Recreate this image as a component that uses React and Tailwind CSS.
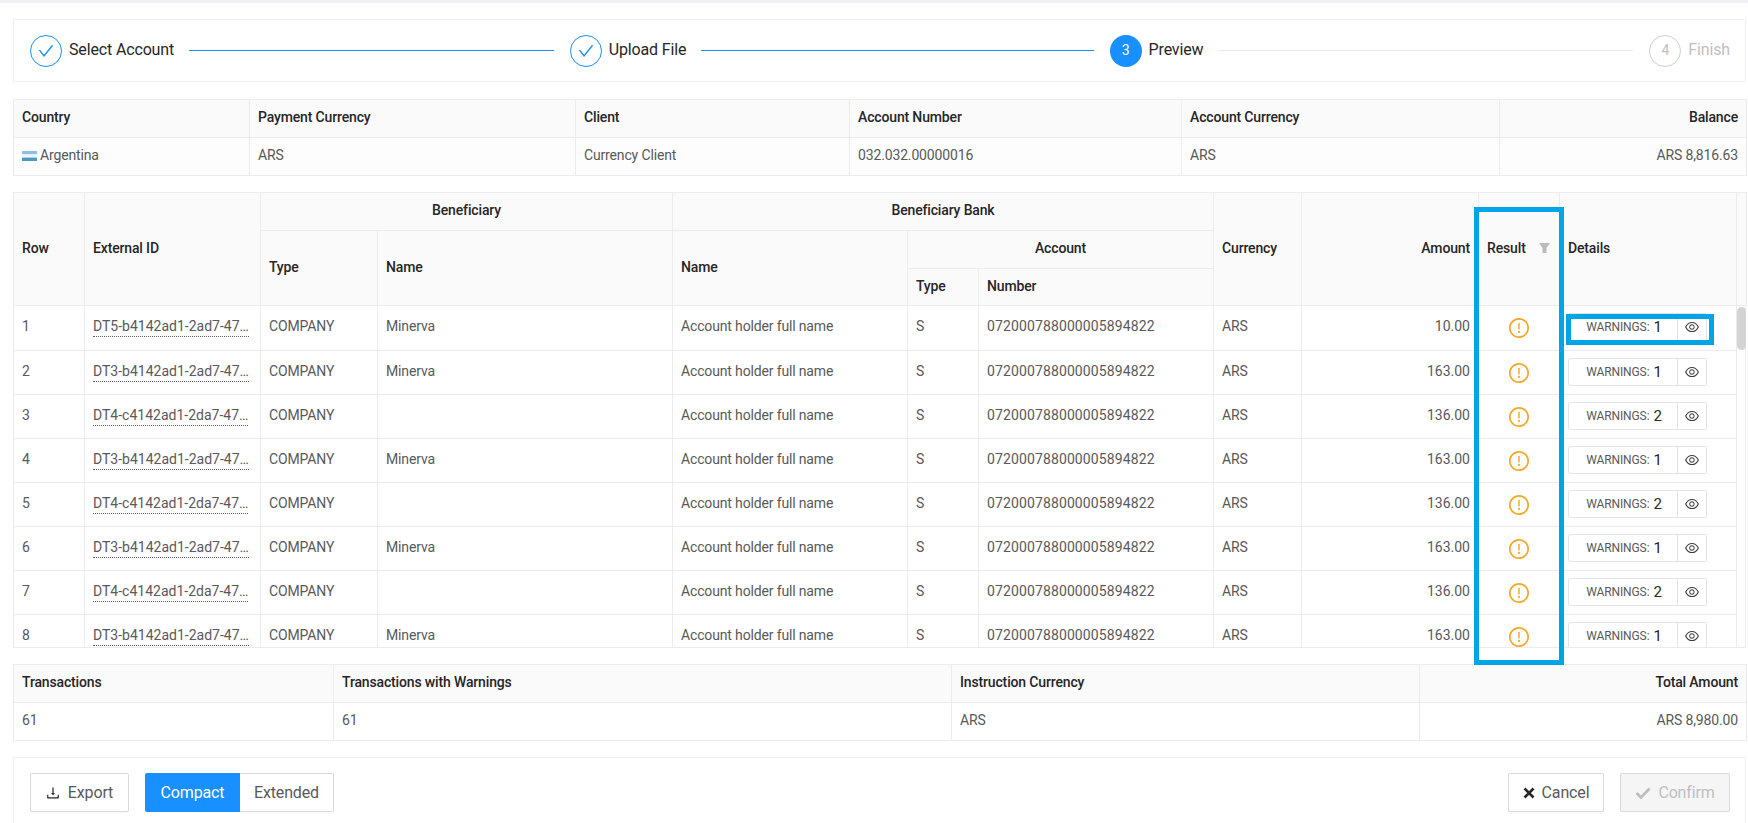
const EYE = "M942.2 486.2C847.4 286.5 704.1 186 512 186c-192.2 0-335.4 100.5-430.2 300.3a60.3 60.3 0 0 0 0 51.5C176.6 737.5 319.9 838 512 838c192.2 0 335.4-100.5 430.2-300.3 7.7-16.2 7.7-35 0-51.5zM512 766c-161.3 0-279.4-81.8-362.7-254C232.6 339.8 350.7 258 512 258c161.3 0 279.4 81.8 362.7 254C791.5 684.2 673.4 766 512 766zm-4-430c-97.2 0-176 78.8-176 176s78.8 176 176 176 176-78.8 176-176-78.8-176-176-176zm0 288c-61.9 0-112-50.1-112-112s50.1-112 112-112 112 50.1 112 112-50.1 112-112 112z";
const CHECK = "M912 190h-69.9c-9.8 0-19.1 4.5-25.1 12.2L404.7 724.5 207 474a32 32 0 0 0-25.1-12.2H112c-6.7 0-10.4 7.7-6.3 12.9l273.9 347c12.8 16.2 37.4 16.2 50.3 0l488.4-618.9c4.1-5.1.4-12.8-6.3-12.8z";
const DOWNLOAD = "M505.7 661a8 8 0 0 0 12.6 0l112-141.7c4.1-5.2.4-12.9-6.3-12.9h-74.1V168c0-4.4-3.6-8-8-8h-60c-4.4 0-8 3.6-8 8v338.3H400c-6.7 0-10.4 7.7-6.3 12.9l112 141.8zM878 626h-60c-4.4 0-8 3.6-8 8v154H214V634c0-4.4-3.6-8-8-8h-60c-4.4 0-8 3.6-8 8v198c0 17.7 14.3 32 32 32h684c17.7 0 32-14.3 32-32V634c0-4.4-3.6-8-8-8z";

function AntIcon({ d, className }) {
  return (
    <svg viewBox="64 64 896 896" fill="currentColor" className={className}>
      <path d={d} />
    </svg>
  );
}

function WarnIcon() {
  return (
    <svg viewBox="64 64 896 896" fill="currentColor" className="w-[20px] h-[20px] text-[#f5a623] inline-block align-middle">
      <path d="M512 64C264.6 64 64 264.6 64 512s200.6 448 448 448 448-200.6 448-448S759.4 64 512 64zm0 820c-205.4 0-372-166.6-372-372s166.6-372 372-372 372 166.6 372 372-166.6 372-372 372z" />
      <path d="M464 688a48 48 0 1 0 96 0 48 48 0 1 0-96 0zm24-112h48c4.4 0 8-3.6 8-8V296c0-4.4-3.6-8-8-8h-48c-4.4 0-8 3.6-8 8v272c0 4.4 3.6 8 8 8z" />
    </svg>
  );
}

function Step({ state, n, label, last }) {
  const circle =
    state === "done"
      ? "border border-[#1890ff] text-[#1890ff]"
      : state === "active"
      ? "bg-[#1890ff] text-white"
      : "border border-[#cfcfcf] text-[#bfbfbf]";
  return (
    <div className={`flex items-center ${last ? "" : "flex-1"}`}>
      <div className={`w-[32px] h-[32px] rounded-full flex items-center justify-center shrink-0 text-[14px] ${circle}`}>
        {state === "done" ? <AntIcon d={CHECK} className="w-[16px] h-[16px]" /> : n}
      </div>
      <span className={`ml-[7px] text-[16px] leading-[32px] mb-[1px] tracking-[-0.15px] whitespace-nowrap ${state === "todo" ? "text-[#bfbfbf]" : "text-[#262626]"}`}>
        {label}
      </span>
      {!last && (
        <div className={`flex-1 h-px ml-[15px] mr-[16px] ${state === "done" ? "bg-[#1890ff]" : "bg-[#ececec]"}`} />
      )}
    </div>
  );
}

const th = "border border-[#ececec] px-2 pt-0 pb-[3px] font-medium text-[#262626] bg-[#fafafa] tracking-[-0.15px]";
const td = "border border-[#ececec] px-2 pt-0 pb-[3px] text-[#595959] tracking-[-0.15px]";

function InfoTable({ cols, heads, cells, bodyBg }) {
  return (
    <table className="w-full table-fixed border-collapse text-[14px] leading-[22px]">
      <colgroup>
        {cols.map((w, i) => (
          <col key={i} className={w} />
        ))}
      </colgroup>
      <thead>
        <tr className="h-[38px]">
          {heads.map((h, i) => (
            <th key={h} className={`${th} ${i === heads.length - 1 ? "text-right" : "text-left"}`}>{h}</th>
          ))}
        </tr>
      </thead>
      <tbody>
        <tr className="h-[38px]">
          {cells.map((c, i) => (
            <td key={i} className={`${td} ${bodyBg} ${i === cells.length - 1 ? "text-right" : ""}`}>{c}</td>
          ))}
        </tr>
      </tbody>
    </table>
  );
}

const rows = [
  ["1", "DT5-b4142ad1-2ad7-47…", "Minerva", "10.00", "1"],
  ["2", "DT3-b4142ad1-2ad7-47…", "Minerva", "163.00", "1"],
  ["3", "DT4-c4142ad1-2da7-47…", "", "136.00", "2"],
  ["4", "DT3-b4142ad1-2ad7-47…", "Minerva", "163.00", "1"],
  ["5", "DT4-c4142ad1-2da7-47…", "", "136.00", "2"],
  ["6", "DT3-b4142ad1-2ad7-47…", "Minerva", "163.00", "1"],
  ["7", "DT4-c4142ad1-2da7-47…", "", "136.00", "2"],
  ["8", "DT3-b4142ad1-2ad7-47…", "Minerva", "163.00", "1"],
];

function Cols() {
  return (
    <>
      <col className="w-[71px]" />
      <col className="w-[176px]" />
      <col className="w-[117px]" />
      <col className="w-[295px]" />
      <col className="w-[235px]" />
      <col className="w-[71px]" />
      <col className="w-[235px]" />
      <col className="w-[88px]" />
      <col className="w-[177px]" />
      <col className="w-[81px]" />
      <col className="w-[177px]" />
    </>
  );
}

function MainTable() {
  return (
    <div className="mt-4 text-[14px] leading-[22px] border-b border-[#ececec]">
      <table className="w-full table-fixed border-collapse">
        <colgroup>
          <Cols />
          <col className="w-[10px]" />
        </colgroup>
        <thead>
          <tr className="h-[38px]">
            <th rowSpan={3} className={`${th} text-left`}>Row</th>
            <th rowSpan={3} className={`${th} text-left`}>External ID</th>
            <th colSpan={2} className={`${th} text-center`}>Beneficiary</th>
            <th colSpan={3} className={`${th} text-center`}>Beneficiary Bank</th>
            <th rowSpan={3} className={`${th} text-left`}>Currency</th>
            <th rowSpan={3} className={`${th} text-right`}>Amount</th>
            <th rowSpan={3} className={`${th} text-left`}>
              <div className="flex items-center justify-between">
                <span>Result</span>
                <svg viewBox="0 0 11 10" className="w-[11px] h-[10px] mr-[1px] text-[#bbbbbb]" fill="currentColor">
                  <path d="M0 0h11L7.5 5v5h-4V5z" />
                </svg>
              </div>
            </th>
            <th rowSpan={3} className={`${th} text-left`}>Details</th>
            <th rowSpan={3} className={`${th} px-0`}></th>
          </tr>
          <tr className="h-[38px]">
            <th rowSpan={2} className={`${th} text-left`}>Type</th>
            <th rowSpan={2} className={`${th} text-left`}>Name</th>
            <th rowSpan={2} className={`${th} text-left`}>Name</th>
            <th colSpan={2} className={`${th} text-center`}>Account</th>
          </tr>
          <tr className="h-[37px]">
            <th className={`${th} text-left`}>Type</th>
            <th className={`${th} text-left`}>Number</th>
          </tr>
        </thead>
      </table>
      <div className="flex h-[341px] overflow-hidden">
        <div className="w-[1723px] shrink-0">
          <table className="w-full table-fixed border-collapse">
            <colgroup>
              <Cols />
            </colgroup>
            <tbody>
              {rows.map((r) => (
                <tr key={r[0]} className="h-[44px]">
                  <td className={`${td} border-t-0`}>{r[0]}</td>
                  <td className={`${td} border-t-0`}>
                    <span className="inline-block leading-[19px] tracking-normal border-b border-dotted border-[#595959] whitespace-nowrap">{r[1]}</span>
                  </td>
                  <td className={`${td} border-t-0`}>COMPANY</td>
                  <td className={`${td} border-t-0`}>{r[2]}</td>
                  <td className={`${td} border-t-0`}>Account holder full name</td>
                  <td className={`${td} border-t-0`}>S</td>
                  <td className={`${td} border-t-0 tracking-[0.12px]`}>072000788000005894822</td>
                  <td className={`${td} border-t-0`}>ARS</td>
                  <td className={`${td} border-t-0 text-right tracking-normal`}>{r[3]}</td>
                  <td className="border border-t-0 border-[#ececec] px-2 pt-0 pb-[1px] text-center"><WarnIcon /></td>
                  <td className="border border-t-0 border-[#ececec] px-2 pt-0 pb-[1px]">
                    <div className="flex h-[28px]">
                      <div className="w-[110px] border border-[#e4e4e4] rounded-l-[2px] flex items-center justify-center pl-[2px]">
                        <span className="text-[12px] text-[#595959] tracking-[-0.1px]">WARNINGS:</span>
                        <span className="ml-[4px] text-[15px] text-[#262626]">{r[4]}</span>
                      </div>
                      <div className="w-[30px] -ml-px border border-[#e4e4e4] rounded-r-[2px] flex items-center justify-center text-[#404040]">
                        <AntIcon d={EYE} className="w-[14px] h-[14px]" />
                      </div>
                    </div>
                  </td>
                </tr>
              ))}
            </tbody>
          </table>
        </div>
        <div className="w-[10px] border-r border-[#ececec]">
          <div className="h-[43px] w-[9px] mt-[1px] ml-px rounded-[5px] bg-[#d4d4d4]" />
        </div>
      </div>
    </div>
  );
}

export default function App() {
  return (
    <div className="relative h-[823px] overflow-hidden bg-white font-[family-name:Roboto,sans-serif]">
      <div className="h-[3px] bg-[#f0f0f5]" />
      <div className="pl-[13px] pr-[2px]">
        <div className="mt-4 h-[63px] border border-[#f0f0f0] pl-[16px] pr-[15px] flex items-center">
          <Step state="done" label="Select Account" />
          <Step state="done" label="Upload File" />
          <Step state="active" n="3" label="Preview" />
          <Step state="todo" n="4" label="Finish" last />
        </div>

        <div className="mt-[17px]">
          <InfoTable
            cols={["w-[236px]", "w-[326px]", "w-[274px]", "w-[332px]", "w-[318px]", "w-[247px]"]}
            heads={["Country", "Payment Currency", "Client", "Account Number", "Account Currency", "Balance"]}
            bodyBg="bg-[#fdfdfd]"
            cells={[
              <span className="flex items-center">
                <svg viewBox="0 0 15 10" className="w-[15px] h-[10px] mr-[3px] mt-[1px]">
                  <rect width="15" height="3.4" fill="#8cc0e6" />
                  <rect y="3.4" width="15" height="3.2" fill="#f2f5f8" />
                  <rect y="6.6" width="15" height="3.4" fill="#4a9ac4" />
                </svg>
                Argentina
              </span>,
              "ARS",
              "Currency Client",
              "032.032.00000016",
              "ARS",
              "ARS 8,816.63",
            ]}
          />
        </div>

        <MainTable />

        <div className="mt-4">
          <InfoTable
            cols={["w-[320px]", "w-[618px]", "w-[468px]", "w-[327px]"]}
            heads={["Transactions", "Transactions with Warnings", "Instruction Currency", "Total Amount"]}
            bodyBg="bg-white"
            cells={["61", "61", "ARS", "ARS 8,980.00"]}
          />
        </div>

        <div className="mt-4 border border-[#f0f0f0] pl-[16px] pr-[15px] py-[15px] flex items-center justify-between text-[16px] tracking-[-0.15px]">
          <div className="flex items-center">
            <button className="h-[39px] w-[99px] border border-[#d9d9d9] rounded-[2px] bg-white text-[#595959] flex items-center justify-center shadow-[0_2px_0_rgba(0,0,0,0.02)]">
              <AntIcon d={DOWNLOAD} className="w-[14px] h-[14px] mr-[8px] text-[#262626]" />
              Export
            </button>
            <div className="ml-[16px] flex">
              <button className="h-[39px] w-[95px] rounded-l-[2px] bg-[#1890ff] text-white">Compact</button>
              <button className="h-[39px] w-[94px] border border-l-0 border-[#d9d9d9] rounded-r-[2px] bg-white text-[#595959] shadow-[0_2px_0_rgba(0,0,0,0.02)]">Extended</button>
            </div>
          </div>
          <div className="flex items-center">
            <button className="h-[39px] w-[96px] border border-[#d9d9d9] rounded-[2px] bg-white text-[#595959] flex items-center justify-center shadow-[0_2px_0_rgba(0,0,0,0.02)]">
              <svg viewBox="0 0 12 12" className="w-[12px] h-[12px] mr-[7px] text-[#262626]" fill="none" stroke="currentColor" strokeWidth="2.6">
                <path d="M1.5 1.5l9 9M10.5 1.5l-9 9" />
              </svg>
              Cancel
            </button>
            <button className="ml-[16px] h-[39px] w-[110px] border border-[#d9d9d9] rounded-[2px] bg-[#f5f5f5] text-[#bfbfbf] flex items-center justify-center">
              <svg viewBox="0 0 16 12" className="w-[16px] h-[12px] mr-[7px]" fill="none" stroke="currentColor" strokeWidth="2.8">
                <path d="M1.5 6l4.5 4.5L14.5 1.5" />
              </svg>
              Confirm
            </button>
          </div>
        </div>
      </div>

      <div className="absolute left-[1474px] top-[207px] w-[90px] h-[458px] border-[5px] border-[#00a5e8]" />
      <div className="absolute left-[1566px] top-[314px] w-[148px] h-[31px] border-[5px] border-[#00a5e8]" />
    </div>
  );
}
